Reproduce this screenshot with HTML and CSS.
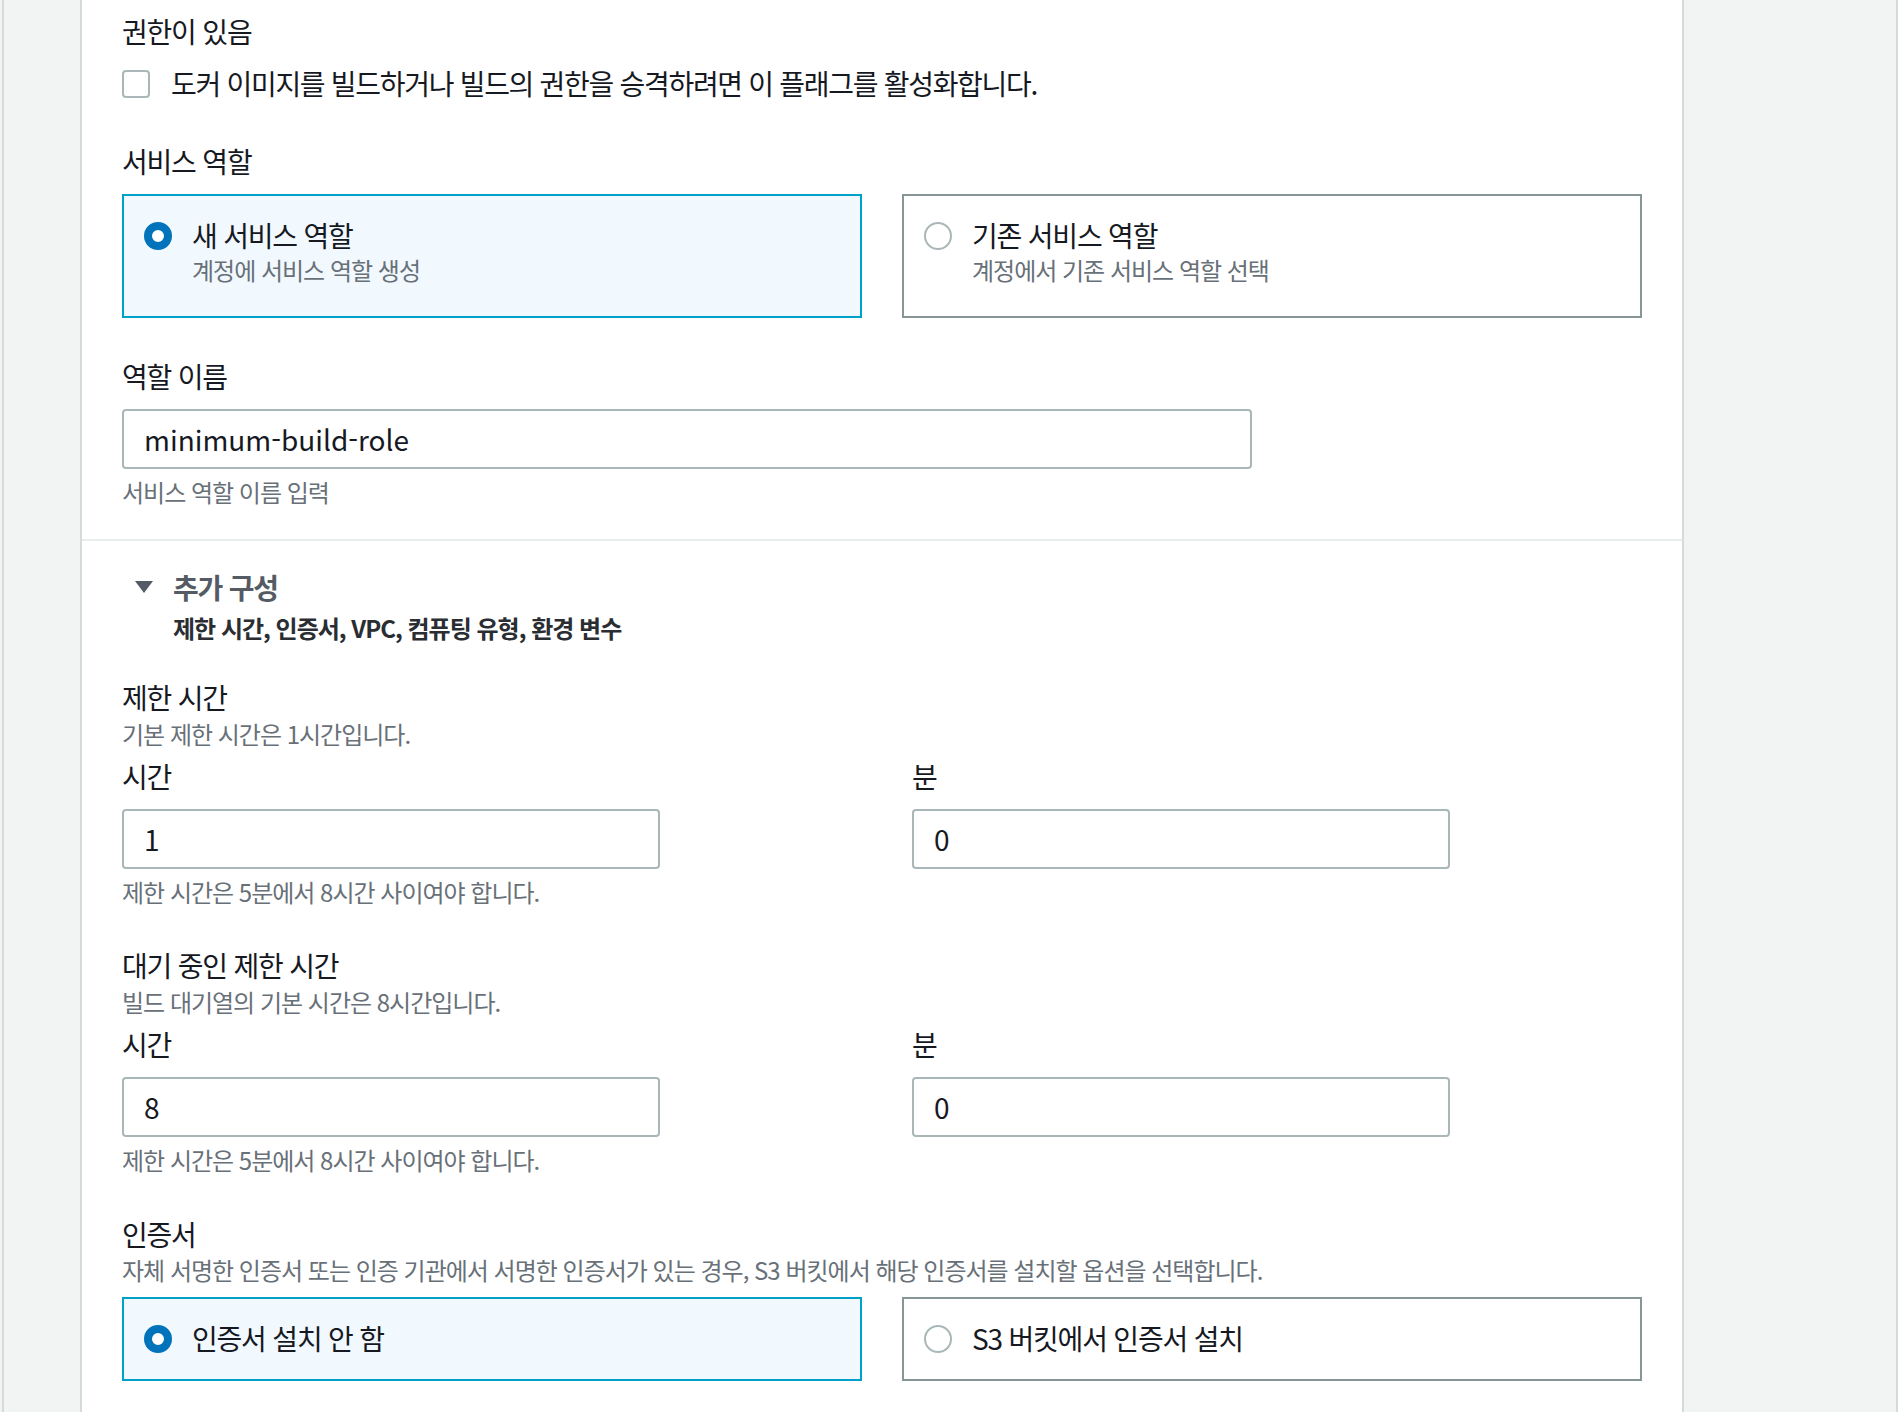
FILE: index.html
```html
<!DOCTYPE html>
<html lang="ko">
<head>
    <meta charset="UTF-8">
    <meta name="viewport" content="width=device-width, initial-scale=1.0">
    <title>프로젝트 빌드 구성</title>
    <link rel="stylesheet" href="styles.css">
</head>
<body>
    <div class="frame">
        <main class="card">
            <!-- 환경 / 서비스 역할 -->
            <section class="block first">
                <div class="label">권한이 있음</div>
                <label class="check">
                    <span class="box"></span>
                    <span>도커 이미지를 빌드하거나 빌드의 권한을 승격하려면 이 플래그를 활성화합니다.</span>
                </label>

                <div class="label gap-40">서비스 역할</div>
                <div class="tiles">
                    <div class="tile selected">
                        <span class="radio on"></span>
                        <div>
                            <div class="tile-title">새 서비스 역할</div>
                            <div class="tile-sub">계정에 서비스 역할 생성</div>
                        </div>
                    </div>
                    <div class="tile">
                        <span class="radio"></span>
                        <div>
                            <div class="tile-title">기존 서비스 역할</div>
                            <div class="tile-sub">계정에서 기존 서비스 역할 선택</div>
                        </div>
                    </div>
                </div>

                <div class="label gap-41">역할 이름</div>
                <input class="text-input wide" type="text" value="minimum-build-role">
                <div class="hint">서비스 역할 이름 입력</div>
            </section>

            <!-- 추가 구성 -->
            <section class="block">
                <div class="expander">
                    <svg class="caret" width="20" height="14" viewBox="0 0 20 14">
                        <polygon points="1,1 19,1 10,13" fill="#545b64"/>
                    </svg>
                    <span>추가 구성</span>
                </div>
                <div class="expander-sub">제한 시간, 인증서, VPC, 컴퓨팅 유형, 환경 변수</div>

                <div class="label gap-35">제한 시간</div>
                <div class="desc">기본 제한 시간은 1시간입니다.</div>
                <div class="pair">
                    <div>
                        <div class="label small-gap">시간</div>
                        <input class="text-input half" type="text" value="1">
                        <div class="hint">제한 시간은 5분에서 8시간 사이여야 합니다.</div>
                    </div>
                    <div>
                        <div class="label small-gap">분</div>
                        <input class="text-input half" type="text" value="0">
                    </div>
                </div>

                <div class="label gap-39">대기 중인 제한 시간</div>
                <div class="desc">빌드 대기열의 기본 시간은 8시간입니다.</div>
                <div class="pair">
                    <div>
                        <div class="label small-gap">시간</div>
                        <input class="text-input half" type="text" value="8">
                        <div class="hint">제한 시간은 5분에서 8시간 사이여야 합니다.</div>
                    </div>
                    <div>
                        <div class="label small-gap">분</div>
                        <input class="text-input half" type="text" value="0">
                    </div>
                </div>

                <div class="label gap-40">인증서</div>
                <div class="desc tight">자체 서명한 인증서 또는 인증 기관에서 서명한 인증서가 있는 경우, S3 버킷에서 해당 인증서를 설치할 옵션을 선택합니다.</div>
                <div class="tiles">
                    <div class="tile selected compact">
                        <span class="radio on"></span>
                        <div class="tile-title">인증서 설치 안 함</div>
                    </div>
                    <div class="tile compact">
                        <span class="radio"></span>
                        <div class="tile-title">S3 버킷에서 인증서 설치</div>
                    </div>
                </div>
            </section>
        </main>
    </div>
</body>
</html>
```

FILE: styles.css
```css
body {
    margin: 0;
    padding: 0;
    background-color: #f2f3f3;
    color: #16191f;
    font-family: "Noto Sans CJK KR", "Noto Sans", sans-serif;
    font-size: 28px;
}

.frame {
    margin-left: 2px;
    border-left: 2px solid #d5dbdb;
    border-right: 2px solid #d5dbdb;
    min-height: 1412px;
    box-sizing: border-box;
    overflow: hidden;
}

.card {
    margin-left: 76px;
    width: 1604px;
    min-height: 1412px;
    box-sizing: border-box;
    background-color: #fff;
    border-left: 2px solid #d5dbdb;
    border-right: 2px solid #d5dbdb;
}

.block {
    padding: 0 40px 30px 40px;
}

.block.first {
    padding-top: 14px;
    border-bottom: 2px solid #eaeded;
}

/* glyphs in this font sit a bit low, so the line box is shifted up a little */
.label {
    line-height: 34px;
    padding-bottom: 6px;
    letter-spacing: -1.2px;
}

.gap-35 { margin-top: 35px; }
.gap-39 { margin-top: 39px; }
.gap-40 { margin-top: 40px; }
.gap-41 { margin-top: 41px; }
.small-gap { margin-top: 8px; }

.check {
    display: flex;
    align-items: center;
    gap: 21px;
    margin-top: 10px;
    height: 40px;
    letter-spacing: -1.3px;
}

.check span:last-child {
    line-height: 38px;
    padding-bottom: 2px;
}

.check .box {
    width: 28px;
    height: 28px;
    box-sizing: border-box;
    border: 2px solid #aab7b8;
    border-radius: 4px;
    background-color: #fff;
    flex-shrink: 0;
}

.tiles {
    display: grid;
    grid-template-columns: 740px 740px;
    column-gap: 40px;
    margin-top: 10px;
}

.tile {
    display: flex;
    align-items: flex-start;
    gap: 20px;
    height: 124px;
    box-sizing: border-box;
    padding: 20px 20px 30px 20px;
    border: 2px solid #879596;
    background-color: #fff;
}

.tile.selected {
    border-color: #00a1c9;
    background-color: #f1f8fe;
}

.tile.compact {
    height: 84px;
    align-items: center;
    padding: 20px;
}

.radio {
    width: 28px;
    height: 28px;
    margin-top: 6px;
    box-sizing: border-box;
    border-radius: 50%;
    border: 2px solid #aab7b8;
    background-color: #fff;
    flex-shrink: 0;
}

.tile.compact .radio {
    margin-top: 0;
}

.radio.on {
    border: 8px solid #0073bb;
}

.tile-title {
    line-height: 38px;
    padding-bottom: 2px;
    letter-spacing: -1.2px;
}

.tile-sub {
    font-size: 24px;
    line-height: 27px;
    padding-bottom: 3px;
    color: #687078;
    letter-spacing: -1px;
}

.text-input {
    display: block;
    margin-top: 10px;
    height: 60px;
    box-sizing: border-box;
    padding: 0 20px;
    border: 2px solid #aab7b8;
    border-radius: 4px;
    font-family: "Noto Sans CJK KR", "Noto Sans", sans-serif;
    font-size: 28px;
    color: #16191f;
    background-color: #fff;
    outline: none;
}

.text-input.wide {
    width: 1130px;
}

.text-input.half {
    width: 538px;
}

.hint {
    margin-top: 10px;
    font-size: 24px;
    line-height: 25px;
    padding-bottom: 5px;
    color: #687078;
    letter-spacing: -1px;
}

.desc {
    margin-top: 1px;
    font-size: 24px;
    line-height: 25px;
    padding-bottom: 5px;
    color: #687078;
    letter-spacing: -1px;
}

.desc.tight {
    margin-top: 0;
}

.pair {
    display: grid;
    grid-template-columns: 760px 760px;
    column-gap: 30px;
}

.expander {
    display: flex;
    align-items: center;
    gap: 19px;
    margin-top: 26px;
    padding-left: 12px;
    height: 40px;
    font-weight: bold;
    color: #545b64;
    letter-spacing: -1.2px;
}

.expander-sub {
    margin-top: 8px;
    padding-left: 51px;
    font-size: 24px;
    line-height: 26px;
    padding-bottom: 4px;
    font-weight: bold;
    color: #2a2e33;
    letter-spacing: -1px;
}
```
